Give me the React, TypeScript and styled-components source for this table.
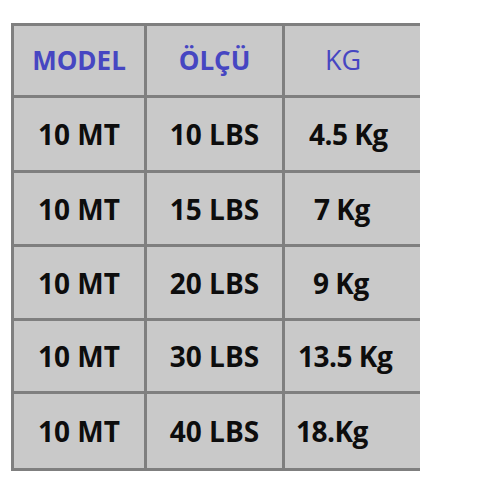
import React from 'react';
import styled, { createGlobalStyle } from 'styled-components';

const GlobalStyle = createGlobalStyle`
  html, body {
    margin: 0;
    padding: 0;
    background: #ffffff;
  }
  body {
    font-family: "Open Sans", "Liberation Sans", sans-serif;
  }
`;

const Page = styled.div`
  padding: 23px 0 0 11px;
`;

const Table = styled.div`
  display: inline-grid;
  grid-template-columns: 130px 135px 135px;
  grid-template-rows: 69px 72px 71px 71px 70px 74px;
  gap: 3px;
  padding: 3px 0 3px 3px;
  background: #7f7f7f;
`;

const Cell = styled.div<{ $indent?: number }>`
  display: flex;
  align-items: center;
  justify-content: ${(p) => (p.$indent === undefined ? 'center' : 'flex-start')};
  padding-left: ${(p) => p.$indent ?? 0}px;
  background: #c9c9c9;
  font-size: 28px;
  font-weight: 700;
  color: #0d0d0d;
  letter-spacing: ${(p) => (p.$indent === undefined ? 0 : -0.5)}px;
  white-space: nowrap;
`;

const HeadCell = styled(Cell)<{ $light?: boolean }>`
  color: #4646c2;
  font-size: ${(p) => (p.$light ? 27 : 26)}px;
  font-weight: ${(p) => (p.$light ? 400 : 700)};
  letter-spacing: 0;
  padding-bottom: 2px;
`;

const rows: [string, string, string, number][] = [
  ['10 MT', '10 LBS', '4.5 Kg', 24],
  ['10 MT', '15 LBS', '7 Kg', 29],
  ['10 MT', '20 LBS', '9 Kg', 28],
  ['10 MT', '30 LBS', '13.5 Kg', 13],
  ['10 MT', '40 LBS', '18.Kg', 11],
];

const App: React.FC = () => (
  <>
    <GlobalStyle />
    <Page>
      <Table>
        <HeadCell>MODEL</HeadCell>
        <HeadCell>ÖLÇÜ</HeadCell>
        <HeadCell $light $indent={40}>KG</HeadCell>
        {rows.map(([model, size, kg, indent], i) => (
          <React.Fragment key={i}>
            <Cell>{model}</Cell>
            <Cell>{size}</Cell>
            <Cell $indent={indent}>{kg}</Cell>
          </React.Fragment>
        ))}
      </Table>
    </Page>
  </>
);

export default App;
